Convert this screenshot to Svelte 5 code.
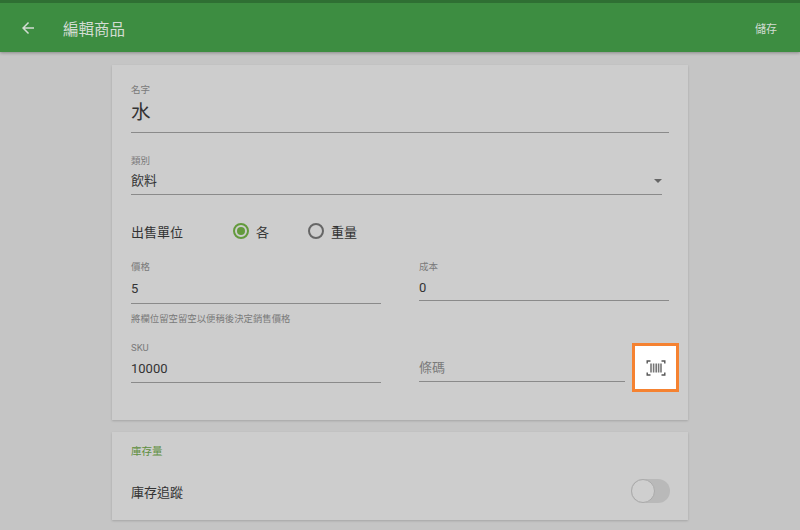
<script>
  let name = "水";
  const units = [
    { label: "各", on: true },
    { label: "重量", on: false },
  ];
</script>

<div class="page">
  <header class="appbar">
    <div class="statusline"></div>
    <div class="barrow">
      <svg class="back" viewBox="0 0 24 24" width="18" height="18">
        <path d="M20 11H7.83l5.59-5.59L12 4l-8 8 8 8 1.41-1.41L7.83 13H20v-2z" fill="#d3dcd3" />
      </svg>
      <h1>編輯商品</h1>
      <span class="save">儲存</span>
    </div>
  </header>

  <main class="content">
    <section class="card main">
      <div class="field name">
        <span class="label">名字</span>
        <div class="value big">{name}</div>
      </div>

      <div class="field category">
        <span class="label">類別</span>
        <div class="value">飲料<span class="caret"></span></div>
      </div>

      <div class="unitrow">
        <span class="unittitle">出售單位</span>
        {#each units as u}
          <span class="radio" class:on={u.on}><i></i></span>
          <span class="unitlabel">{u.label}</span>
        {/each}
      </div>

      <div class="cols price">
        <div class="field">
          <span class="label">價格</span>
          <div class="value">5</div>
        </div>
        <div class="field cost">
          <span class="label">成本</span>
          <div class="value">0</div>
        </div>
      </div>
      <p class="hint">將欄位留空留空以便稍後決定銷售價格</p>

      <div class="cols sku">
        <div class="field">
          <span class="label latin">SKU</span>
          <div class="value">10000</div>
        </div>
        <div class="barcode">
          <div class="value placeholder">條碼</div>
          <button class="scan" aria-label="scan">
            <svg viewBox="0 0 24 24" width="24" height="24" fill="none">
              <path d="M6.5 5H3.2v2.6M17.5 5h3.3v2.6M6.5 19H3.2v-2.6M17.5 19h3.3v-2.6" stroke="#555" stroke-width="1.4" />
              <path d="M7 7.5v9M9.6 7.5v9M12.2 7.5v9M14.6 7.5v9M17 7.5v9" stroke="#777" stroke-width="1.6" />
            </svg>
          </button>
        </div>
      </div>
    </section>

    <section class="card stock">
      <h2>庫存量</h2>
      <div class="stockrow">
        <span>庫存追蹤</span>
        <span class="switch"><i></i></span>
      </div>
    </section>
  </main>
</div>

<style>
  :global(body) {
    margin: 0;
    background: #c5c5c5;
  }
  .page {
    width: 800px;
    height: 530px;
    overflow: hidden;
    font-family: Roboto, "Noto Sans CJK TC", sans-serif;
    color: #333;
    background: #c5c5c5;
  }
  .appbar {
    height: 52px;
    background: #3d8d41;
    box-shadow: 0 1px 3px rgba(0, 0, 0, 0.3);
  }
  .statusline {
    height: 3px;
    background: #2f6f33;
  }
  .barrow {
    display: flex;
    align-items: center;
    height: 49px;
    padding: 0 23px 0 19px;
  }
  .back {
    margin-right: 26px;
  }
  h1 {
    margin: 0;
    font-size: 15.5px;
    font-weight: 400;
    color: #d3dcd3;
    flex: 1;
  }
  .save {
    font-size: 11px;
    color: #d3dcd3;
  }
  .content {
    width: 576px;
    margin: 0 auto;
    padding-top: 13px;
    display: flex;
    flex-direction: column;
    gap: 12px;
  }
  .card {
    background: #cdcdcd;
    box-shadow: 0 1px 2px rgba(0, 0, 0, 0.16);
    box-sizing: border-box;
    padding: 0 19px;
  }
  .main {
    height: 355px;
    padding-top: 19px;
  }
  .field {
    display: block;
  }
  .label {
    display: block;
    height: 12px;
    line-height: 12px;
    font-size: 9.5px;
    color: #7a7a7a;
  }
  .value {
    position: relative;
    font-size: 13px;
    line-height: 20px;
    border-bottom: 1px solid #8a8a8a;
  }
  .name .value {
    height: 36px;
    line-height: 34px;
  }
  .big {
    font-size: 19.5px;
  }
  .category {
    margin-top: 22px;
    margin-right: 7px;
  }
  .category .value {
    height: 27px;
    line-height: 27px;
  }
  .caret {
    position: absolute;
    right: 0;
    top: 12px;
    border-left: 4.5px solid transparent;
    border-right: 4.5px solid transparent;
    border-top: 4px solid #666;
  }
  .unitrow {
    display: flex;
    align-items: center;
    height: 24px;
    margin-top: 24px;
    font-size: 13px;
  }
  .unittitle {
    width: 102px;
  }
  .radio {
    width: 16px;
    height: 16px;
    border: 2px solid #666;
    border-radius: 50%;
    box-sizing: border-box;
    display: flex;
    align-items: center;
    justify-content: center;
    margin-right: 7px;
  }
  .radio.on {
    border-color: #639a3c;
  }
  .radio.on i {
    width: 8px;
    height: 8px;
    border-radius: 50%;
    background: #639a3c;
  }
  .unitlabel {
    margin-right: 39px;
  }
  .cols {
    display: flex;
    gap: 38px;
  }
  .cols > * {
    flex: 1;
  }
  .price {
    margin-top: 18px;
  }
  .price .value {
    height: 30px;
    line-height: 32px;
  }
  .price .cost .value {
    height: 27px;
    line-height: 30px;
  }
  .hint {
    margin: 9px 0 0;
    font-size: 9.4px;
    line-height: 12px;
    color: #7a7a7a;
  }
  .sku {
    margin-top: 17px;
    align-items: flex-start;
  }
  .sku .value {
    height: 28px;
    line-height: 29px;
  }
  .barcode {
    position: relative;
    padding-top: 12px;
  }
  .barcode .value {
    width: 206px;
    height: 27px;
    line-height: 28px;
    color: #7a7a7a;
  }
  .scan {
    position: absolute;
    left: 213px;
    top: 1px;
    width: 47px;
    height: 49px;
    padding: 0;
    border: 3px solid #f58231;
    background: #fff;
    display: flex;
    align-items: center;
    justify-content: center;
  }
  .stock {
    height: 88px;
    padding-top: 13px;
  }
  h2 {
    margin: 0;
    font-size: 10.5px;
    line-height: 14px;
    font-weight: 400;
    color: #5f8f3f;
  }
  .stockrow {
    display: flex;
    align-items: center;
    justify-content: space-between;
    margin-top: 19px;
    font-size: 13px;
    height: 26px;
  }
  .switch {
    position: relative;
    width: 39px;
    height: 24px;
    margin-right: -1px;
    border-radius: 12px;
    background: #b9b9b9;
  }
  .switch i {
    position: absolute;
    left: 0;
    top: 0;
    width: 24px;
    height: 24px;
    box-sizing: border-box;
    border-radius: 50%;
    background: #cfcfcf;
    border: 1px solid #aaa;
  }
</style>
